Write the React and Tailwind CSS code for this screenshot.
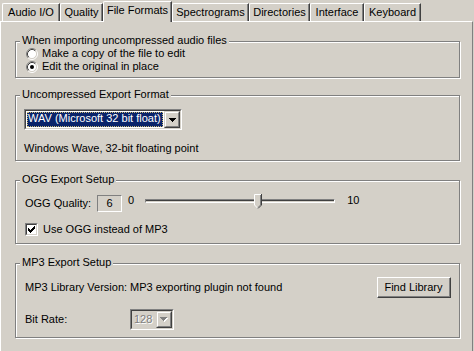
import React from "react";

// classic win2k "file formats" prefs page

const tabs = [
    { label: "Audio I/O", w: "w-[58px]" },
    { label: "Quality", w: "w-[43px]" },
    { label: "File Formats", w: "w-[69px]", active: true },
    { label: "Spectrograms", w: "w-[77px]" },
    { label: "Directories", w: "w-[61px]" },
    { label: "Interface", w: "w-[54px]" },
    { label: "Keyboard", w: "w-[57px]" },
];

function Tab({ label, w, active }) {
    if (active) {
        return (
            <div className={`${w} flex h-[21px] justify-center rounded-tl-[2px] border-l border-t border-r border-l-white border-t-white border-r-[#404040] bg-[#d4d0c8] pt-[2px] shadow-[inset_-1px_0_#808080]`}>
                {label}
            </div>
        );
    }
    return (
        <div className={`${w} mb-px flex h-[18px] justify-center rounded-tl-[2px] border-l border-t border-r border-l-white border-t-white border-r-[#404040] pt-[2px] shadow-[inset_-1px_0_#808080]`}>
            {label}
        </div>
    );
}

function Group({ label, className, children }) {
    return (
        <div className={`relative ml-[14px] w-[445px] border border-[#808080] shadow-[1px_1px_0_white,inset_1px_1px_0_white] ${className}`}>
            <span className="absolute left-[4px] top-[-8px] bg-[#d4d0c8] px-[2px]">{label}</span>
            {children}
        </div>
    );
}

function Radio({ checked }) {
    return (
        <svg width="12" height="12" viewBox="0 0 12 12" className="shrink-0">
            <circle cx="6" cy="6" r="4.5" fill="white" />
            <path d="M2.11 9.89A5.5 5.5 0 0 1 9.89 2.11" stroke="#808080" fill="none" />
            <path d="M9.89 2.11A5.5 5.5 0 0 1 2.11 9.89" stroke="white" fill="none" />
            <path d="M2.82 9.18A4.5 4.5 0 0 1 9.18 2.82" stroke="#404040" fill="none" />
            <path d="M9.18 2.82A4.5 4.5 0 0 1 2.82 9.18" stroke="#d4d0c8" fill="none" />
            {checked && <circle cx="6" cy="6" r="2" fill="black" />}
        </svg>
    );
}

function Arrow({ color = "black" }) {
    return (
        <svg width="7" height="4" viewBox="0 0 7 4">
            <path d="M0 0h7v1H0zM1 1h5v1H1zM2 2h3v1H2zM3 3h1v1H3z" fill={color} />
        </svg>
    );
}

function DropButton({ disabled }) {
    return (
        <div className="flex h-full w-[16px] shrink-0 border border-t-[#d4d0c8] border-l-[#d4d0c8] border-b-[#404040] border-r-[#404040] bg-[#d4d0c8]">
            <div className="flex flex-1 items-center justify-center border border-t-white border-l-white border-b-[#808080] border-r-[#808080]">
                {disabled ? (
                    <div className="relative h-[5px] w-[8px]">
                        <div className="absolute left-px top-px"><Arrow color="white" /></div>
                        <div className="absolute left-0 top-0"><Arrow color="#808080" /></div>
                    </div>
                ) : (
                    <Arrow />
                )}
            </div>
        </div>
    );
}

function Sunken({ className, inner, children }) {
    return (
        <div className={`flex border border-t-[#808080] border-l-[#808080] border-b-white border-r-white ${className}`}>
            <div className={`flex flex-1 border border-t-[#404040] border-l-[#404040] border-b-[#d4d0c8] border-r-[#d4d0c8] ${inner}`}>
                {children}
            </div>
        </div>
    );
}

const checkPixels = [
    [6, 0], [5, 1], [6, 1], [0, 2], [4, 2], [5, 2], [6, 2],
    [0, 3], [1, 3], [3, 3], [4, 3], [5, 3],
    [0, 4], [1, 4], [2, 4], [3, 4], [4, 4],
    [1, 5], [2, 5], [3, 5], [2, 6],
];

function Checkbox() {
    return (
        <Sunken className="h-[13px] w-[13px] shrink-0" inner="items-center justify-center bg-white">
            <svg width="7" height="7" viewBox="0 0 7 7">
                {checkPixels.map(([x, y]) => (
                    <rect key={`${x}-${y}`} x={x} y={y} width="1" height="1" fill="black" />
                ))}
            </svg>
        </Sunken>
    );
}

function SliderThumb() {
    return (
        <svg width="8" height="15" viewBox="0 0 8 15">
            <path d="M0 0h8v11l-4 4l-4-4z" fill="#d4d0c8" />
            <path d="M0.5 11V0.5H7" stroke="white" fill="none" />
            <path d="M0.5 11l3.5 3.5" stroke="white" fill="none" />
            <path d="M7.5 0v11l-3.5 3.5" stroke="#404040" fill="none" />
            <path d="M6.5 1v10l-2.5 2.5" stroke="#808080" fill="none" />
        </svg>
    );
}

export default function App() {
    return (
        <div className="h-[351px] w-[474px] overflow-hidden bg-[#d4d0c8] font-['Liberation_Sans',Arial,sans-serif] text-[11px] leading-[13px] text-black">
            <div className="relative z-10 flex h-[22px] items-end pl-[2px]">
                {tabs.map((t) => (
                    <Tab key={t.label} {...t} />
                ))}
            </div>

            <div className="-mt-px h-[340px] w-[473px] border-l border-t border-r border-l-white border-t-white border-r-[#808080]">
                <Group label="When importing uncompressed audio files" className="mt-[19px] h-[37px] pl-[10px] pt-[5px]">
                    <div className="flex h-[13px] items-center gap-[4px]">
                        <Radio />
                        <span>Make a copy of the file to edit</span>
                    </div>
                    <div className="flex h-[13px] items-center gap-[4px]">
                        <Radio checked />
                        <span>Edit the original in place</span>
                    </div>
                </Group>

                <Group label="Uncompressed Export Format" className="mt-[17px] h-[66px] pl-[8px] pt-[13px]">
                    <Sunken className="h-[21px] w-[158px]" inner="bg-white">
                        <div className="flex flex-1 p-px">
                            <div className="flex-1 bg-[#0a246a] pl-px leading-[13px] text-white outline-1 outline-dotted outline-[#c8b878] -outline-offset-1">
                                WAV (Microsoft 32 bit float)
                            </div>
                        </div>
                        <DropButton />
                    </Sunken>
                    <p className="mt-[12px]">Windows Wave, 32-bit floating point</p>
                </Group>

                <Group label="OGG Export Setup" className="mt-[19px] h-[64px] pl-[9px] pt-[14px]">
                    <div className="flex h-[17px] items-center">
                        <span className="w-[72px]">OGG Quality:</span>
                        <div className="flex h-[17px] w-[25px] items-center justify-center border border-t-[#808080] border-l-[#808080] border-b-white border-r-white">
                            6
                        </div>
                        <div className="mb-[6px] flex items-center">
                            <span className="ml-[6px]">0</span>
                            <div className="relative ml-[11px] h-[4px] w-[190px]">
                                <div className="h-full w-full border border-t-[#808080] border-l-[#808080] border-b-white border-r-white shadow-[inset_0_1px_#404040]" />
                                <div className="absolute left-[109px] top-[-5px] flex">
                                    <SliderThumb />
                                </div>
                            </div>
                            <span className="ml-[12px]">10</span>
                        </div>
                    </div>
                    <div className="mt-[11px] flex h-[13px] items-center gap-[5px]">
                        <Checkbox />
                        <span>Use OGG instead of MP3</span>
                    </div>
                </Group>

                <Group label="MP3 Export Setup" className="mt-[19px] h-[75px] pl-[9px] pr-[8px] pt-[13px]">
                    <div className="flex h-[21px] items-center">
                        <span className="w-[105px]">MP3 Library Version:</span>
                        <span>MP3 exporting plugin not found</span>
                        <button className="ml-auto flex h-[21px] w-[74px] border border-t-white border-l-white border-b-[#404040] border-r-[#404040] bg-[#d4d0c8]">
                            <span className="flex flex-1 items-center justify-center border-b border-r border-b-[#808080] border-r-[#808080]">
                                Find Library
                            </span>
                        </button>
                    </div>
                    <div className="mt-[11px] flex h-[21px] items-center">
                        <span className="w-[105px]">Bit Rate:</span>
                        <Sunken className="h-[21px] w-[44px]" inner="bg-[#d4d0c8]">
                            <span className="flex-1 pl-[2px] leading-[17px] text-[#808080] [text-shadow:1px_1px_0_white]">128</span>
                            <DropButton disabled />
                        </Sunken>
                    </div>
                </Group>
            </div>
        </div>
    );
}
